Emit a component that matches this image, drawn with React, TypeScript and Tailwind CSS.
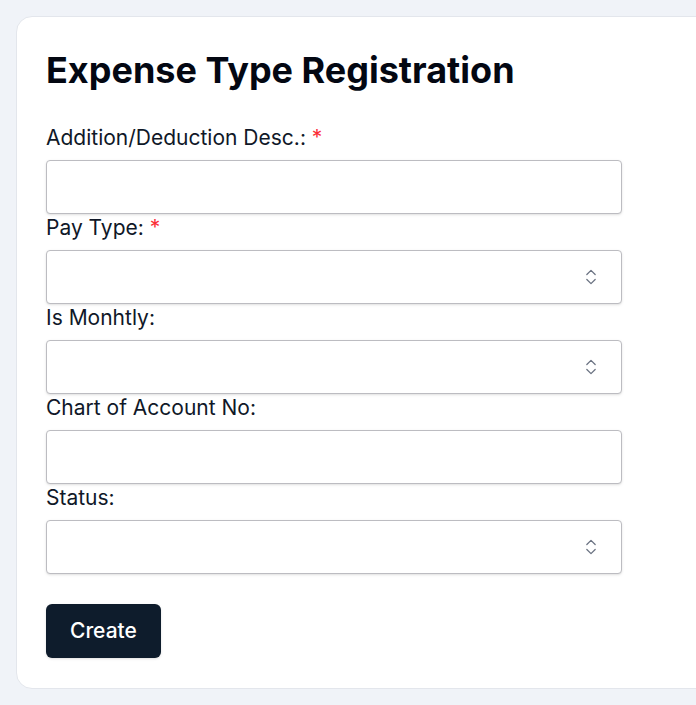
import React from 'react';
import { ChevronsUpDown } from 'lucide-react';

const Label: React.FC<{ text: string; required?: boolean }> = ({ text, required }) => (
  <label className="block text-[21px] leading-7 text-gray-900">
    {text}
    {required && <span className="text-red-500"> *</span>}
  </label>
);

const TextField: React.FC<{ label: string; required?: boolean }> = ({ label, required }) => (
  <div>
    <Label text={label} required={required} />
    <input
      type="text"
      className="mt-2 block h-[54px] w-[576px] rounded border border-[#bcbcc1] bg-white px-3 text-lg shadow-sm outline-none"
    />
  </div>
);

const SelectField: React.FC<{ label: string; required?: boolean }> = ({ label, required }) => (
  <div>
    <Label text={label} required={required} />
    <div className="relative mt-2 h-[54px] w-[576px] rounded border border-[#bcbcc1] bg-white shadow-sm">
      <ChevronsUpDown
        size={20}
        strokeWidth={1.5}
        className="absolute right-[20px] top-1/2 -translate-y-1/2 text-gray-500"
      />
    </div>
  </div>
);

const App: React.FC = () => {
  return (
    <div
      className="min-h-screen w-screen overflow-hidden bg-[#f0f3f8] pt-4 pb-[17px]"
      style={{ fontFamily: 'Inter, "Noto Sans", sans-serif' }}
    >
      <div className="ml-4 w-[760px] rounded-2xl border border-[#e3e6ec] bg-white pl-[29px] pt-[33px] pb-[30px]">
        <h1 className="text-4xl font-bold text-gray-950">Expense Type Registration</h1>
        <div className="mt-[34px] flex flex-col">
          <TextField label="Addition/Deduction Desc.:" required />
          <SelectField label="Pay Type:" required />
          <SelectField label="Is Monhtly:" />
          <TextField label="Chart of Account No:" />
          <SelectField label="Status:" />
        </div>
        <button className="mt-[30px] h-[54px] rounded-md bg-[#0e1c2c] px-6 text-[21px] font-medium text-white shadow-sm">
          Create
        </button>
      </div>
    </div>
  );
};

export default App;
